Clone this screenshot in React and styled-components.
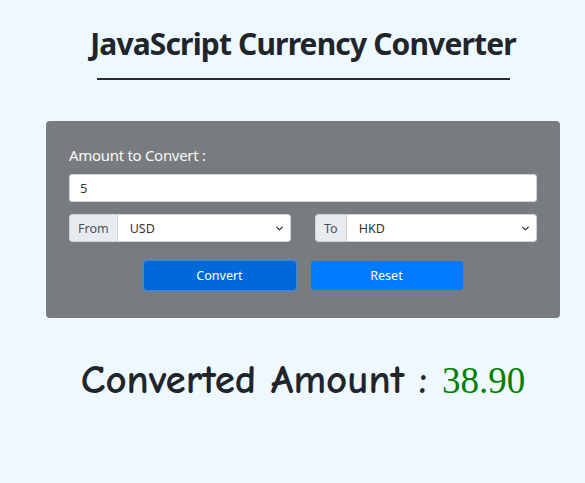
import { useState } from "react";
import styled, { createGlobalStyle } from "styled-components";
import { ChevronDown } from "lucide-react";

const rates = { USD: 1, HKD: 7.78, EUR: 0.92, GBP: 0.79, INR: 83.1, JPY: 151.2 };
const codes = Object.keys(rates);

const GlobalStyle = createGlobalStyle`
    body {
        margin: 0;
        background-color: #eef8ff;
        font-family: "Noto Sans", "Open Sans", sans-serif;
    }
`;

const CurrencySelect = ({ label, value, onChange }) => (
    <InputGroup>
        <Addon>{label}</Addon>
        <SelectWrap>
            <Select value={value} onChange={(e) => onChange(e.target.value)}>
                {codes.map((c) => (
                    <option key={c} value={c}>{c}</option>
                ))}
            </Select>
            <Chevron size={11} strokeWidth={3} />
        </SelectWrap>
    </InputGroup>
);

const App = () => {
    const [amount, setAmount] = useState("5");
    const [from, setFrom] = useState("USD");
    const [to, setTo] = useState("HKD");
    const [result, setResult] = useState("38.90");

    const handleConvert = () => {
        const value = (parseFloat(amount || 0) / rates[from]) * rates[to];
        setResult(value.toFixed(2));
    };

    const handleReset = () => {
        setAmount("");
        setResult("");
    };

    return (
        <>
            <GlobalStyle />
            <Page>
                <Title>JavaScript Currency Converter</Title>
                <Divider />
                <Panel>
                    <Label>Amount to Convert :</Label>
                    <AmountInput value={amount} onChange={(e) => setAmount(e.target.value)} />
                    <SelectRow>
                        <CurrencySelect label="From" value={from} onChange={setFrom} />
                        <CurrencySelect label="To" value={to} onChange={setTo} />
                    </SelectRow>
                    <ButtonRow>
                        <Button $focused onClick={handleConvert}>Convert</Button>
                        <Button onClick={handleReset}>Reset</Button>
                    </ButtonRow>
                </Panel>
                <Result>
                    Converted Amount : <Value>{result}</Value>
                </Result>
            </Page>
        </>
    );
};

export default App;

const Page = styled.div`
    width: 514px;
    margin-left: 46px;
    padding-top: 23px;
`;

const Title = styled.h1`
    margin: 0;
    text-align: center;
    font-size: 30px;
    font-weight: 700;
    letter-spacing: -0.85px;
    color: #212529;
`;

const Divider = styled.div`
    width: 413px;
    height: 2px;
    margin: 14px auto 0;
    background-color: #2b2b2b;
`;

const Panel = styled.div`
    margin-top: 41px;
    padding: 24px 23px 28px;
    border-radius: 4px;
    background-color: #787c7e;
`;

const Label = styled.div`
    font-size: 15px;
    letter-spacing: -0.3px;
    color: #f8f9fa;
    margin-bottom: 9px;
`;

const AmountInput = styled.input`
    box-sizing: border-box;
    display: block;
    width: 100%;
    height: 28px;
    padding: 0 10px;
    border: 1px solid #ced4da;
    border-radius: 3px;
    font-family: inherit;
    font-size: 13px;
    color: #333;
    outline: none;
`;

const SelectRow = styled.div`
    display: grid;
    grid-template-columns: 1fr 1fr;
    gap: 24px;
    margin-top: 12px;
`;

const InputGroup = styled.div`
    display: flex;
    height: 28px;
    border: 1px solid #ced4da;
    border-radius: 3px;
    overflow: hidden;
    box-sizing: border-box;
`;

const Addon = styled.span`
    display: flex;
    align-items: center;
    padding: 0 8px;
    background-color: #e9ecef;
    border-right: 1px solid #ced4da;
    font-size: 12.5px;
    color: #495057;
`;

const SelectWrap = styled.div`
    position: relative;
    flex: 1;
    background-color: #fff;
`;

const Select = styled.select`
    appearance: none;
    width: 100%;
    height: 100%;
    border: none;
    padding: 0 12px;
    background: transparent;
    font-family: inherit;
    font-size: 12.5px;
    color: #333;
    outline: none;
`;

const Chevron = styled(ChevronDown)`
    position: absolute;
    right: 5px;
    top: 8px;
    color: #333;
    pointer-events: none;
`;

const ButtonRow = styled.div`
    display: flex;
    justify-content: center;
    gap: 15px;
    margin-top: 19px;
`;

const Button = styled.button`
    width: 152px;
    height: 29px;
    border: none;
    border-radius: 3px;
    font-family: inherit;
    font-size: 12.5px;
    color: #fff;
    cursor: pointer;
    background-color: ${({ $focused }) => ($focused ? "#0069d9" : "#007bff")};
    box-shadow: ${({ $focused }) => ($focused ? "0 0 0 2px rgba(38, 143, 255, 0.5)" : "none")};
`;

const Result = styled.div`
    margin-top: 38px;
    text-align: center;
    font-family: "Comic Sans MS", "Comic Neue", "DejaVu Sans", sans-serif;
    font-size: 41px;
    font-weight: 700;
    color: #212529;
`;

const Value = styled.span`
    font-family: "Liberation Serif", "Times New Roman", serif;
    font-size: 37px;
    font-weight: 400;
    color: #008000;
`;
